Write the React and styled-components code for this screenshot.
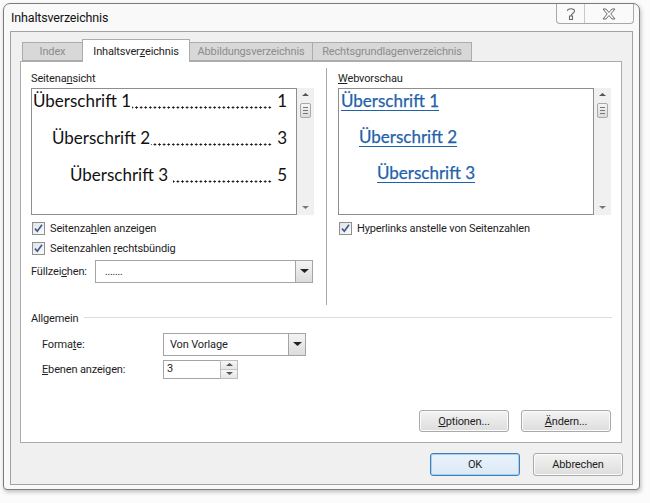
import styled, { createGlobalStyle } from 'styled-components'

const Global = createGlobalStyle`
    html, body{
        margin: 0;
        padding: 0;
        background: #fbfbfb;
    }
    body{
        font-family: Roboto, "Liberation Sans", sans-serif;
        font-size: 11px;
        letter-spacing: -0.15px;
        color: #1e1e1e;
    }
`;

const Page = styled.div`
    width: 650px;
    height: 503px;
    padding: 3px 0 0 3px;
    box-sizing: border-box;
    overflow: hidden;
`;

const Window = styled.div`
    width: 637px;
    height: 487px;
    box-sizing: border-box;
    border: 1px solid #7d7d7d;
    border-radius: 7px 7px 4px 4px;
    background: #f9f9f9;
    box-shadow: 1px 2px 4px rgba(0,0,0,0.25);
    display: flex;
    flex-direction: column;
`;

const TitleBar = styled.div`
    height: 27px;
    display: flex;
    align-items: flex-start;
    padding-left: 7px;
`;

const Title = styled.div`
    font-size: 12.5px;
    margin-top: 6px;
    color: #111;
`;

const Caption = styled.div`
    margin-left: auto;
    margin-right: 5px;
    display: flex;
    height: 19px;
    border: 1px solid #a8a8a8;
    border-top: none;
    border-radius: 0 0 4px 4px;
    background: #fafafa;
`;

const CaptionButton = styled.div`
    width: ${p => p.$w}px;
    display: flex;
    align-items: center;
    justify-content: center;
    & + &{
        border-left: 1px solid #c8c8c8;
    }
`;

const Client = styled.div`
    flex: 1;
    margin: 0 6px 4px 6px;
    border: 1px solid #a2a2a2;
    background: #f0f0f0;
    display: flex;
    flex-direction: column;
`;

const Tabs = styled.div`
    display: flex;
    align-items: flex-end;
    height: 22px;
    margin-top: 7px;
    padding-left: 11px;
    position: relative;
    z-index: 1;
`;

const Tab = styled.div`
    width: ${p => p.$w}px;
    height: ${p => p.$active ? 23 : 19}px;
    box-sizing: border-box;
    display: flex;
    align-items: center;
    justify-content: center;
    white-space: nowrap;
    border: 1px solid #acacac;
    border-bottom: ${p => p.$active ? 'none' : '1px solid #acacac'};
    background: ${p => p.$active ? '#fff' : '#d8d8d8'};
    color: ${p => p.$active ? '#1e1e1e' : '#8c8c8c'};
    margin-bottom: ${p => p.$active ? -1 : 0}px;
    & + &{
        margin-left: -1px;
    }
`;

const Panel = styled.div`
    width: 602px;
    height: 382px;
    margin-left: 9px;
    box-sizing: border-box;
    border: 1px solid #acacac;
    background: #fff;
    display: flex;
    flex-direction: column;
`;

const Columns = styled.div`
    height: 243px;
    box-sizing: border-box;
    padding: 9px 0 0 10px;
    display: flex;
`;

const Column = styled.div`
    width: ${p => p.$w}px;
    display: flex;
    flex-direction: column;
`;

const Divider = styled.div`
    width: 1px;
    margin: -3px 11px 0 12px;
    background: #a8a8a8;
`;

const Label = styled.div`
    height: 16px;
    line-height: 16px;
    white-space: nowrap;
`;

const PreviewWrap = styled.div`
    margin: 1px 0 3px;
    display: flex;
    height: 127px;
`;

const PreviewBox = styled.div`
    width: ${p => p.$w}px;
    box-sizing: border-box;
    border: 1px solid #8e8e8e;
    padding: 0 9px 0 1px;
    display: flex;
    flex-direction: column;
    gap: ${p => p.$gap}px;
    font-family: Lato, "Open Sans", sans-serif;
    font-size: 17px;
    letter-spacing: 0;
    color: #111;
`;

const TocLine = styled.div`
    display: flex;
    height: 24px;
    line-height: 24px;
    padding-left: ${p => p.$indent}px;
    white-space: nowrap;
`;

/* tab leader: a dotted run between heading and page number */
const Leader = styled.i`
    flex: 1;
    height: 24px;
    margin: 0 5px 0 ${p => p.$gap}px;
    background-image: radial-gradient(circle, #1a1a1a 0.9px, transparent 1.3px);
    background-size: 4.6px 3px;
    background-repeat: repeat-x;
    background-position: right 17px;
`;

const Link = styled.div`
    height: 24px;
    line-height: 24px;
    padding-left: ${p => p.$indent}px;
    & span{
        color: #1f62ab;
        text-decoration: underline;
        text-underline-offset: 3px;
        -webkit-text-stroke: 0.25px #1f62ab;
    }
`;

const ScrollBar = styled.div`
    width: 17px;
    background: #f0f0f0;
    display: flex;
    flex-direction: column;
    align-items: center;
    padding: 5px 0;
    box-sizing: border-box;
`;

const Thumb = styled.div`
    width: 11px;
    height: 15px;
    margin-top: 6px;
    box-sizing: border-box;
    border: 1px solid #a9a9a9;
    border-radius: 2px;
    background: linear-gradient(#f5f5f5, #dcdcdc);
    display: flex;
    flex-direction: column;
    align-items: center;
    justify-content: center;
    gap: 2px;
    & i{
        width: 5px;
        height: 1px;
        background: #777;
    }
`;

const Filler = styled.div`
    flex: 1;
`;

const Check = styled.div`
    height: 20px;
    display: flex;
    align-items: center;
    gap: 5px;
    margin-left: 1px;
    white-space: nowrap;
`;

const Box = styled.div`
    width: 13px;
    height: 13px;
    box-sizing: border-box;
    border: 1px solid #8f8f8f;
    background: linear-gradient(135deg, #e4e4e4, #fafafa);
    display: flex;
    align-items: center;
    justify-content: center;
`;

const FieldRow = styled.div`
    display: flex;
    align-items: center;
    margin-top: ${p => p.$top || 0}px;
    padding-left: ${p => p.$pad || 0}px;
`;

const FieldLabel = styled.div`
    width: ${p => p.$w}px;
    white-space: nowrap;
`;

const Select = styled.div`
    width: ${p => p.$w}px;
    height: ${p => p.$h}px;
    box-sizing: border-box;
    border: 1px solid #a4a4a4;
    background: #fff;
    display: flex;
    align-items: center;
    padding-left: ${p => p.$pl}px;
    font-size: ${p => p.$fs || 11}px;
`;

const DropButton = styled.div`
    margin-left: auto;
    width: 17px;
    height: 100%;
    box-sizing: border-box;
    border-left: 1px solid #a4a4a4;
    background: linear-gradient(#f4f4f4, #dcdcdc);
    display: flex;
    align-items: center;
    justify-content: center;
`;

const Spin = styled.div`
    display: flex;
    height: 19px;
`;

const SpinInput = styled.div`
    width: 57px;
    box-sizing: border-box;
    border: 1px solid #a4a4a4;
    border-right: none;
    padding-left: 3px;
    line-height: 16px;
    background: #fff;
`;

const SpinButtons = styled.div`
    width: 18px;
    box-sizing: border-box;
    border: 1px solid #bdbdbd;
    display: flex;
    flex-direction: column;
`;

const SpinHalf = styled.div`
    flex: 1;
    display: flex;
    align-items: center;
    justify-content: center;
    background: linear-gradient(#f6f6f6, #e6e6e6);
    & + &{
        border-top: 1px solid #c4c4c4;
    }
`;

const GroupTitle = styled.div`
    display: flex;
    align-items: center;
    height: 16px;
    margin-top: 5px;
    padding: 0 9px 0 10px;
    &::after{
        content: '';
        flex: 1;
        height: 1px;
        margin-left: 6px;
        margin-top: -2px;
        background: #dcdcdc;
    }
`;

const ButtonRow = styled.div`
    display: flex;
    justify-content: flex-end;
    gap: ${p => p.$gap}px;
    margin-top: ${p => p.$top}px;
    padding-right: ${p => p.$right}px;
`;

const Button = styled.div`
    width: 90px;
    height: ${p => p.$h || 22}px;
    box-sizing: border-box;
    border: 1px solid ${p => p.$focus ? '#3d7fb6' : '#a9a9a9'};
    border-radius: 3px;
    background: ${p => p.$focus ? 'linear-gradient(#eaf3fb, #dbe9f5)' : 'linear-gradient(#f3f3f3, #dddddd)'};
    box-shadow: ${p => p.$focus ? 'inset 0 0 0 1px #a6d0ef' : 'inset 0 0 0 1px #fbfbfb'};
    display: flex;
    align-items: center;
    justify-content: center;
    color: #1e1e1e;
`;

const U = styled.span`
    text-decoration: underline;
    text-underline-offset: 1px;
`;

const Arrow = ({ up, size = 4, color = '#222' }) => (
    <svg width={size * 2 + 1} height={size + 1} viewBox={`0 0 ${size * 2 + 1} ${size + 1}`}>
        <polygon points={up ? `0,${size} ${size * 2 + 1},${size} ${size + 0.5},0` : `0,0 ${size * 2 + 1},0 ${size + 0.5},${size}`} fill={color} />
    </svg>
);

const CheckMark = () => (
    <svg width="11" height="11" viewBox="0 0 11 11">
        <path d="M2 5.6 L4.3 8.2 L9 1.8" fill="none" stroke="#3d5b8f" strokeWidth="1.7" />
    </svg>
);

const Scroll = () => (
    <ScrollBar>
        <Arrow up size={3} color="#555" />
        <Thumb><i /><i /><i /></Thumb>
        <Filler />
        <Arrow size={3} color="#777" />
    </ScrollBar>
);

function CheckItem({ children }){
    return(
        <Check>
            <Box><CheckMark /></Box>
            <span>{children}</span>
        </Check>
    )
}

function TocEntry({ indent, gap, title, page }){
    return(
        <TocLine $indent={indent}>
            <span>{title}</span>
            <Leader $gap={gap} />
            <span>{page}</span>
        </TocLine>
    )
}

export default function App(){
    return(
        <Page>
            <Global />
            <Window>
                <TitleBar>
                    <Title>Inhaltsverzeichnis</Title>
                    <Caption>
                        <CaptionButton $w={27}>
                            <svg width="10" height="14" viewBox="0 0 10 14">
                                <path d="M1.5 4 C1.5 1 8.5 1 8.5 4 C8.5 6.5 5 6.5 5 9 M3.5 9 L6.5 9 L6.5 12.5 L3.5 12.5 Z" fill="none" stroke="#6a6a6a" strokeWidth="1.1" />
                            </svg>
                        </CaptionButton>
                        <CaptionButton $w={48}>
                            <svg width="14" height="12" viewBox="0 0 14 12">
                                <path d="M1 1 L4 1 L7 4.5 L10 1 L13 1 L8.8 6 L13 11 L10 11 L7 7.5 L4 11 L1 11 L5.2 6 Z" fill="#fff" stroke="#6a6a6a" strokeWidth="1" />
                            </svg>
                        </CaptionButton>
                    </Caption>
                </TitleBar>
                <Client>
                    <Tabs>
                        <Tab $w={61}>Index</Tab>
                        <Tab $active $w={108}>Inhaltsver<U>z</U>eichnis</Tab>
                        <Tab $w={124}>Abbildungsverzeichnis</Tab>
                        <Tab $w={160}>Rechtsgrundlagenverzeichnis</Tab>
                    </Tabs>
                    <Panel>
                        <Columns>
                            <Column $w={283}>
                                <Label>Seitena<U>n</U>sicht</Label>
                                <PreviewWrap>
                                    <PreviewBox $w={266} $gap={13}>
                                        <TocEntry indent={0} gap={1} title="Überschrift 1" page="1" />
                                        <TocEntry indent={19} gap={1} title="Überschrift 2" page="3" />
                                        <TocEntry indent={37} gap={5} title="Überschrift 3" page="5" />
                                    </PreviewBox>
                                    <Scroll />
                                </PreviewWrap>
                                <CheckItem>Seitenza<U>h</U>len anzeigen</CheckItem>
                                <CheckItem>Seitenzahlen <U>r</U>echtsbündig</CheckItem>
                                <FieldRow $top={2}>
                                    <FieldLabel $w={64}>Füllzei<U>c</U>hen:</FieldLabel>
                                    <Select $w={218} $h={23} $pl={9} $fs={10}>
                                        .......
                                        <DropButton><Arrow size={4} /></DropButton>
                                    </Select>
                                </FieldRow>
                            </Column>
                            <Divider />
                            <Column $w={273}>
                                <Label><U>W</U>ebvorschau</Label>
                                <PreviewWrap>
                                    <PreviewBox $w={256} $gap={12}>
                                        <Link $indent={1}><span>Überschrift 1</span></Link>
                                        <Link $indent={19}><span>Überschrift 2</span></Link>
                                        <Link $indent={37}><span>Überschrift 3</span></Link>
                                    </PreviewBox>
                                    <Scroll />
                                </PreviewWrap>
                                <CheckItem>H<U>y</U>perlinks anstelle von Seitenzahlen</CheckItem>
                            </Column>
                        </Columns>
                        <GroupTitle>Allgemein</GroupTitle>
                        <FieldRow $top={7} $pad={21}>
                            <FieldLabel $w={121}>Forma<U>t</U>e:</FieldLabel>
                            <Select $w={143} $h={23} $pl={6}>
                                Von Vorlage
                                <DropButton><Arrow size={4} /></DropButton>
                            </Select>
                        </FieldRow>
                        <FieldRow $top={4} $pad={21}>
                            <FieldLabel $w={121}><U>E</U>benen anzeigen:</FieldLabel>
                            <Spin>
                                <SpinInput>3</SpinInput>
                                <SpinButtons>
                                    <SpinHalf><Arrow up size={3} color="#555" /></SpinHalf>
                                    <SpinHalf><Arrow size={3} color="#555" /></SpinHalf>
                                </SpinButtons>
                            </Spin>
                        </FieldRow>
                        <ButtonRow $gap={12} $top={31} $right={10}>
                            <Button><U>O</U>ptionen...</Button>
                            <Button><U>Ä</U>ndern...</Button>
                        </ButtonRow>
                    </Panel>
                    <ButtonRow $gap={13} $top={10} $right={9}>
                        <Button $focus $h={23}>OK</Button>
                        <Button $h={23}>Abbrechen</Button>
                    </ButtonRow>
                </Client>
            </Window>
        </Page>
    )
}
